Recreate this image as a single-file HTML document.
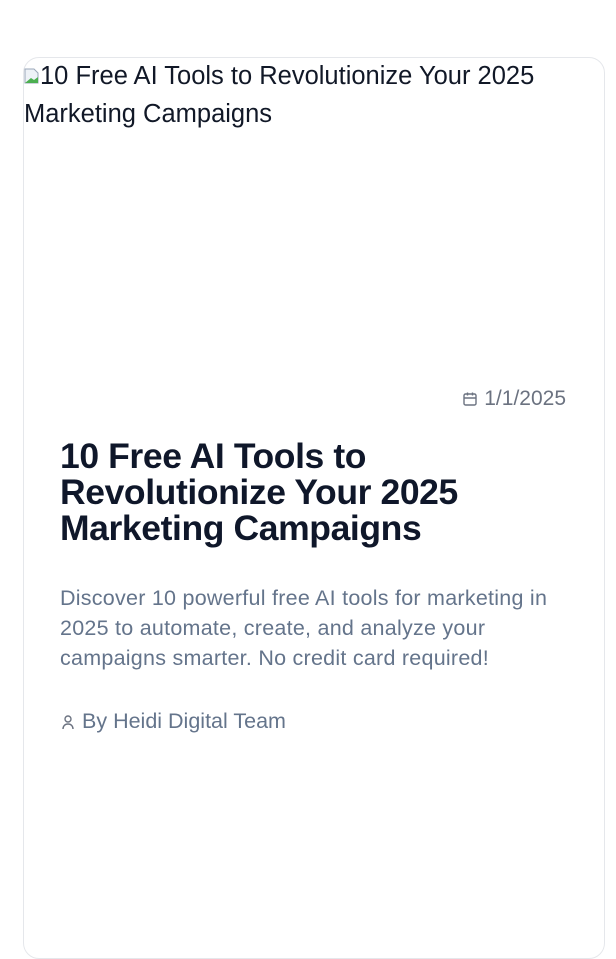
<!DOCTYPE html>
<html><head><meta charset="utf-8"><style>
html,body{margin:0;width:616px;height:814px;overflow:hidden;background:#fff;font-family:"Liberation Sans",sans-serif;}
.card{position:absolute;left:23px;top:57px;width:580px;height:900px;border:1px solid #e5e7eb;border-radius:16px;}
.alt{position:absolute;left:24px;top:57px;width:580px;font-size:25.5px;line-height:38px;color:#111827;}
.broken{display:inline-block;width:16px;height:16px;vertical-align:0px;position:relative;}
.date{position:absolute;right:50px;top:387px;font-size:21px;color:#6b7280;display:flex;align-items:center;gap:6px;}
h1{position:absolute;left:60px;top:438px;width:480px;margin:0;font-size:35.5px;line-height:36px;font-weight:700;color:#0f172a;letter-spacing:-0.4px;}
.desc{position:absolute;left:60px;top:583px;width:540px;white-space:nowrap;font-size:21.5px;letter-spacing:0.25px;line-height:30px;color:#64748b;}
.auth{position:absolute;left:60px;top:709px;font-size:21.5px;color:#64748b;display:flex;align-items:center;gap:6px;}
</style></head><body>
<div class="card"></div>
<div class="alt"><span class="broken"><svg width="16" height="16" viewBox="0 0 16 16"><path d="M1 1h9l4 4v10H1z" fill="#eef2f7" stroke="#9aa7b8"/><path d="M1 15l6-5 3 2 4-3v6z" fill="#4caf50"/></svg></span>10 Free AI Tools to Revolutionize Your 2025 Marketing Campaigns</div>
<div class="date"><svg width="16" height="16" viewBox="0 0 16 16" fill="none" stroke="#6b7280" stroke-width="1.4"><rect x="2" y="3" width="12" height="11" rx="1.5"/><path d="M2 7h12M5.5 1.5v3M10.5 1.5v3"/></svg>1/1/2025</div>
<h1>10 Free AI Tools to<br>Revolutionize Your 2025<br>Marketing Campaigns</h1>
<div class="desc">Discover 10 powerful free AI tools for marketing in<br>2025 to automate, create, and analyze your<br>campaigns smarter. No credit card required!</div>
<div class="auth"><svg width="16" height="16" viewBox="0 0 16 16" fill="none" stroke="#6b7280" stroke-width="1.4"><circle cx="8" cy="5" r="3"/><path d="M3 15c0-3 2-5 5-5s5 2 5 5"/></svg>By Heidi Digital Team</div>
</body></html>
